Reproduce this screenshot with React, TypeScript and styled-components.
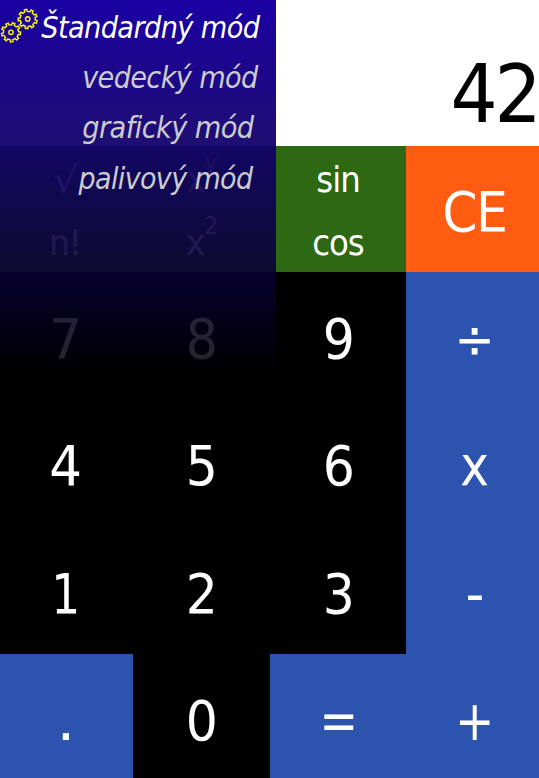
import React from "react";
import styled, { createGlobalStyle } from "styled-components";

const GlobalStyle = createGlobalStyle`
  * { box-sizing: border-box; }
  body { margin: 0; background: #000; overflow: hidden; }
`;

const Calculator = styled.main`
  position: relative;
  width: 539px;
  height: 778px;
  overflow: hidden;
  background: #000;
  color: #fff;
  font-family: "DejaVu Sans Condensed", "DejaVu Sans", sans-serif;
  font-stretch: condensed;
`;

const Display = styled.div`
  height: 146px;
  background: #fff;
  color: #000;
  display: flex;
  justify-content: flex-end;
  padding-top: 48px;
  font-size: 80px;
  line-height: 94px;
  letter-spacing: -3px;

  span {
    transform: scaleX(1.03);
    transform-origin: right;
  }
`;

const Keypad = styled.div`
  display: grid;
  grid-template-columns: 136px 137px 136px 136px;
  grid-template-rows: 126px 127px 127px 128px 127px;
  margin-left: -3px;
  width: 545px;
`;

type Tone = "digit" | "operator" | "clear";
const tones: Record<Tone, string> = {
  digit: "#000",
  operator: "#2c54ae",
  clear: "#ff5b11",
};

const Key = styled.button<{ $tone: Tone }>`
  border: 0;
  padding: ${(p) => (p.$tone === "clear" ? "5px 0 0" : "7px 0 0 1px")};
  display: flex;
  align-items: center;
  justify-content: center;
  background: ${(p) => tones[p.$tone]};
  color: #fff;
  font: inherit;
  font-size: 55px;
  line-height: 64px;
`;

const Glyph = styled.span<{ $scale?: number; $spacing?: number }>`
  display: inline-block;
  letter-spacing: ${(p) => p.$spacing ?? 0}px;
  transform: scaleX(${(p) => p.$scale ?? 1.02});
`;

const Functions = styled.div`
  display: grid;
  grid-template-rows: 1fr 1fr;
  background: #2d6812;
`;

const FunctionKey = styled.button`
  border: 0;
  padding: 4px 0 0;
  background: transparent;
  color: #fff;
  font: inherit;
  font-size: 36px;
  line-height: 42px;
  letter-spacing: -1px;
`;

const Power = styled.sup`
  font-size: 24px;
  line-height: 0;
  vertical-align: 21px;
`;

const Menu = styled.nav`
  position: absolute;
  top: 0;
  left: 0;
  width: 276px;
  height: 376px;
  padding-top: 2px;
  background: linear-gradient(to bottom, rgb(26, 0, 163), rgba(0, 0, 0, 0.85));
`;

const MenuItem = styled.a<{ $active?: boolean; $inset: number; $scale: number }>`
  display: flex;
  justify-content: flex-end;
  align-items: center;
  height: 50.4px;
  padding-right: ${(p) => p.$inset}px;
  color: ${(p) => (p.$active ? "#fff" : "#ccc")};
  font-size: 30px;
  font-style: italic;
  letter-spacing: -0.6px;
  white-space: nowrap;

  span {
    transform: scaleX(${(p) => p.$scale});
    transform-origin: right;
  }
`;

const Gears = styled.svg`
  position: absolute;
  left: 0;
  top: 8px;
  width: 40px;
  height: 36px;
  fill: none;
  stroke: #ff0;
  stroke-width: 1.4;
`;

/** Outline of a toothed wheel around a centre point. */
function gearPath(cx: number, cy: number, turn: number) {
  const teeth = 9;
  const step = (Math.PI * 2) / teeth;
  const points: string[] = [];
  for (let i = 0; i < teeth; i++) {
    const a = i * step + turn;
    for (const [r, o] of [[7.6, -0.25], [9.6, -0.19], [9.6, 0.19], [7.6, 0.25]]) {
      points.push(`${(cx + r * Math.cos(a + o * step)).toFixed(2)} ${(cy + r * Math.sin(a + o * step)).toFixed(2)}`);
    }
  }
  return `M${points.join("L")}Z`;
}

const modes = [
  { name: "Štandardný mód", inset: 16.5, scale: 1.008, active: true },
  { name: "vedecký mód", inset: 18.5, scale: 1.005 },
  { name: "grafický mód", inset: 22, scale: 1.01 },
  { name: "palivový mód", inset: 24, scale: 0.997 },
];

const keys: { label: string; tone: Tone; scale?: number }[] = [
  { label: "7", tone: "digit", scale: 1.06 },
  { label: "8", tone: "digit" },
  { label: "9", tone: "digit" },
  { label: "÷", tone: "operator", scale: 0.97 },
  { label: "4", tone: "digit", scale: 1.04 },
  { label: "5", tone: "digit" },
  { label: "6", tone: "digit" },
  { label: "x", tone: "operator", scale: 0.98 },
  { label: "1", tone: "digit", scale: 0.92 },
  { label: "2", tone: "digit", scale: 1.02 },
  { label: "3", tone: "digit" },
  { label: "-", tone: "operator", scale: 1.05 },
  { label: ".", tone: "operator", scale: 1.2 },
  { label: "0", tone: "digit" },
  { label: "=", tone: "operator", scale: 0.93 },
  { label: "+", tone: "operator", scale: 0.95 },
];

export default function App() {
  return (
    <Calculator>
      <GlobalStyle />
      <Display><span>42</span></Display>
      <Keypad>
        <Functions>
          <FunctionKey><Glyph $scale={1.3}>√</Glyph></FunctionKey>
          <FunctionKey>n!</FunctionKey>
        </Functions>
        <Functions>
          <FunctionKey>x<Power>y</Power></FunctionKey>
          <FunctionKey>x<Power>2</Power></FunctionKey>
        </Functions>
        <Functions>
          <FunctionKey>sin</FunctionKey>
          <FunctionKey>cos</FunctionKey>
        </Functions>
        <Key $tone="clear"><Glyph $scale={1.02} $spacing={-1.5}>CE</Glyph></Key>
        {keys.map((k) => (
          <Key key={k.label} $tone={k.tone}>
            <Glyph $scale={k.scale}>{k.label}</Glyph>
          </Key>
        ))}
      </Keypad>
      <Menu>
        <Gears viewBox="0 0 40 36">
          <path d={gearPath(11, 24.3, 0.1)} />
          <circle cx="11" cy="24.3" r="2.2" />
          <path d={gearPath(27.7, 11, 0.3)} />
          <circle cx="27.7" cy="11" r="2.2" />
        </Gears>
        {modes.map((m) => (
          <MenuItem key={m.name} $active={m.active} $inset={m.inset} $scale={m.scale}>
            <span>{m.name}</span>
          </MenuItem>
        ))}
      </Menu>
    </Calculator>
  );
}
